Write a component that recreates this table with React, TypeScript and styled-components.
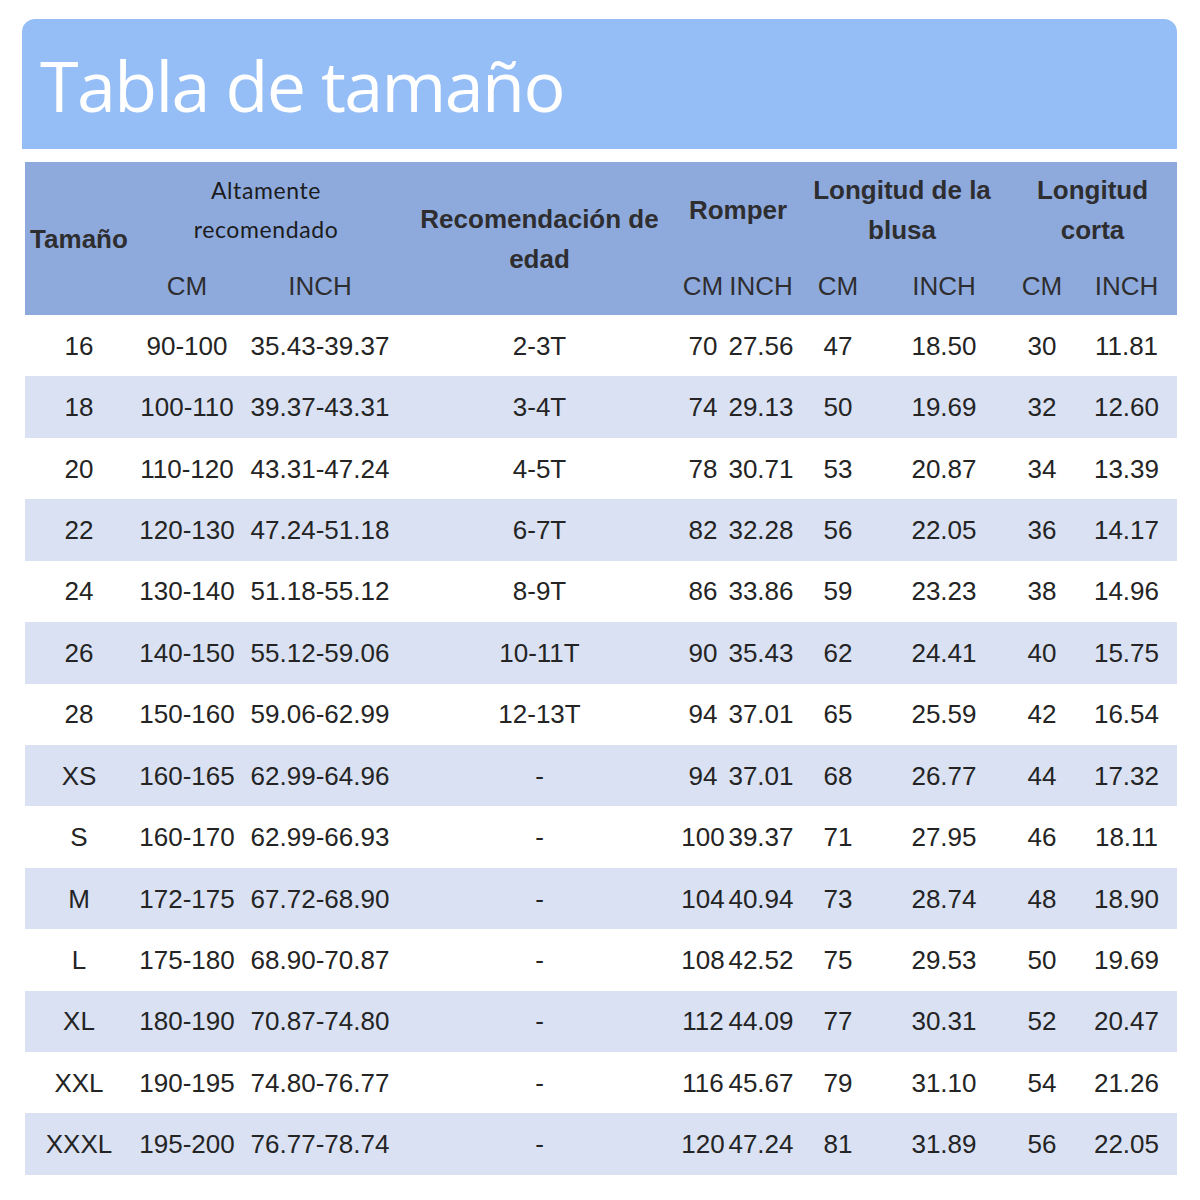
import React from "react";
import styled, { createGlobalStyle } from "styled-components";

const Global = createGlobalStyle`
  html, body { margin: 0; padding: 0; background: #ffffff; }
  body { font-family: "Liberation Sans", Arial, sans-serif; }
`;

const Page = styled.div`
  width: 1200px;
  height: 1200px;
  padding: 19px 23px 0 22px;
  box-sizing: border-box;
  background: #ffffff;
  display: flex;
  flex-direction: column;
`;

const TitleBar = styled.div`
  height: 130px;
  box-sizing: border-box;
  background: #95bdf6;
  border-radius: 13px 13px 0 0;
  padding: 31px 0 0 18px;
`;

const Title = styled.h1`
  margin: 0;
  font-family: "Open Sans", "Noto Sans", sans-serif;
  font-weight: 400;
  font-size: 70px;
  line-height: 70px;
  letter-spacing: -1.6px;
  color: #ffffff;
`;

const Table = styled.table`
  margin: 13px 0 0 3px;
  width: 1152px;
  border-collapse: collapse;
  table-layout: fixed;
  font-family: "Liberation Sans", Arial, sans-serif;
`;

const HeadRow = styled.tr<{ $h: number }>`
  height: ${(p) => p.$h}px;
  background: #8eaadd;
`;

const HeadCell = styled.th<{ $variant?: "bold" | "soft" | "unit" }>`
  padding: 0;
  text-align: center;
  vertical-align: middle;
  color: ${(p) => (p.$variant === "soft" ? "#1c1c1e" : "#2e2e30")};
  white-space: nowrap;
  font-size: ${(p) => (p.$variant === "soft" ? "23px" : "26px")};
  font-family: ${(p) =>
    p.$variant === "soft"
      ? 'Lato, "Open Sans", sans-serif'
      : '"Liberation Sans", Arial, sans-serif'};
  font-weight: ${(p) => (p.$variant === "bold" ? 700 : 400)};
  letter-spacing: ${(p) => (p.$variant === "soft" ? "0.6px" : "0")};
  line-height: ${(p) => (p.$variant === "soft" ? "39px" : "40px")};
`;

const BodyRow = styled.tr<{ $striped: boolean }>`
  height: 61.43px;
  background: ${(p) => (p.$striped ? "#d9e1f3" : "#ffffff")};
`;

const Cell = styled.td`
  padding: 1px 0 0;
  text-align: center;
  vertical-align: middle;
  white-space: nowrap;
  font-size: 26px;
  color: #242424;
  overflow: visible;
`;

const widths = [108, 108, 158, 281, 46, 70, 84, 128, 68, 101];

const rows: string[][] = [
  ["16", "90-100", "35.43-39.37", "2-3T", "70", "27.56", "47", "18.50", "30", "11.81"],
  ["18", "100-110", "39.37-43.31", "3-4T", "74", "29.13", "50", "19.69", "32", "12.60"],
  ["20", "110-120", "43.31-47.24", "4-5T", "78", "30.71", "53", "20.87", "34", "13.39"],
  ["22", "120-130", "47.24-51.18", "6-7T", "82", "32.28", "56", "22.05", "36", "14.17"],
  ["24", "130-140", "51.18-55.12", "8-9T", "86", "33.86", "59", "23.23", "38", "14.96"],
  ["26", "140-150", "55.12-59.06", "10-11T", "90", "35.43", "62", "24.41", "40", "15.75"],
  ["28", "150-160", "59.06-62.99", "12-13T", "94", "37.01", "65", "25.59", "42", "16.54"],
  ["XS", "160-165", "62.99-64.96", "-", "94", "37.01", "68", "26.77", "44", "17.32"],
  ["S", "160-170", "62.99-66.93", "-", "100", "39.37", "71", "27.95", "46", "18.11"],
  ["M", "172-175", "67.72-68.90", "-", "104", "40.94", "73", "28.74", "48", "18.90"],
  ["L", "175-180", "68.90-70.87", "-", "108", "42.52", "75", "29.53", "50", "19.69"],
  ["XL", "180-190", "70.87-74.80", "-", "112", "44.09", "77", "30.31", "52", "20.47"],
  ["XXL", "190-195", "74.80-76.77", "-", "116", "45.67", "79", "31.10", "54", "21.26"],
  ["XXXL", "195-200", "76.77-78.74", "-", "120", "47.24", "81", "31.89", "56", "22.05"],
];

export default function App() {
  return (
    <Page>
      <Global />
      <TitleBar>
        <Title>Tabla de tamaño</Title>
      </TitleBar>
      <Table>
        <colgroup>
          {widths.map((w, i) => (
            <col key={i} style={{ width: w }} />
          ))}
        </colgroup>
        <thead>
          <HeadRow $h={95}>
            <HeadCell $variant="bold" rowSpan={2}>
              Tamaño
            </HeadCell>
            <HeadCell $variant="soft" colSpan={2}>
              Altamente
              <br />
              recomendado
            </HeadCell>
            <HeadCell $variant="bold" rowSpan={2}>
              Recomendación de
              <br />
              edad
            </HeadCell>
            <HeadCell $variant="bold" colSpan={2}>
              Romper
            </HeadCell>
            <HeadCell $variant="bold" colSpan={2}>
              Longitud de la
              <br />
              blusa
            </HeadCell>
            <HeadCell $variant="bold" colSpan={2}>
              Longitud
              <br />
              corta
            </HeadCell>
          </HeadRow>
          <HeadRow $h={58}>
            <HeadCell $variant="unit">CM</HeadCell>
            <HeadCell $variant="unit">INCH</HeadCell>
            <HeadCell $variant="unit">CM</HeadCell>
            <HeadCell $variant="unit">INCH</HeadCell>
            <HeadCell $variant="unit">CM</HeadCell>
            <HeadCell $variant="unit">INCH</HeadCell>
            <HeadCell $variant="unit">CM</HeadCell>
            <HeadCell $variant="unit">INCH</HeadCell>
          </HeadRow>
        </thead>
        <tbody>
          {rows.map((r, i) => (
            <BodyRow key={i} $striped={i % 2 === 1}>
              {r.map((c, j) => (
                <Cell key={j}>{c}</Cell>
              ))}
            </BodyRow>
          ))}
        </tbody>
      </Table>
    </Page>
  );
}
